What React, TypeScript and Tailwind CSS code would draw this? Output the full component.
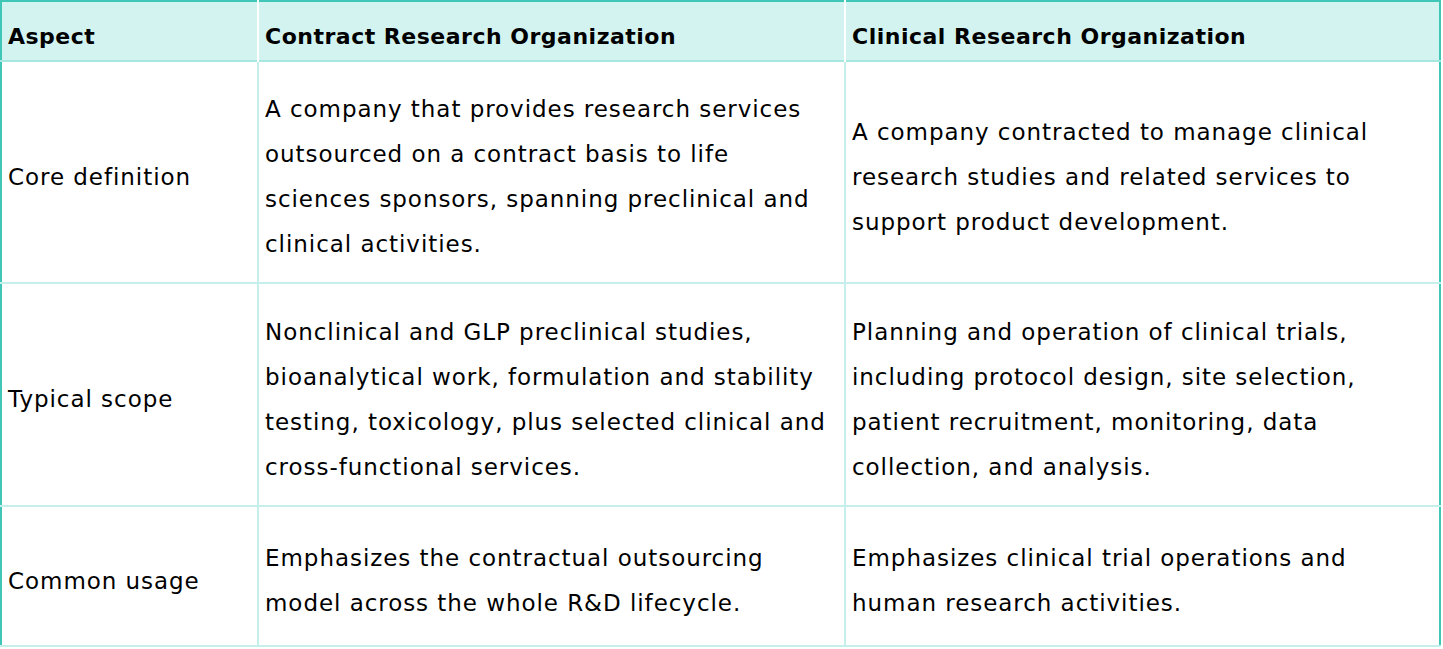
import React from "react";

const rows = [
  {
    aspect: "Core definition",
    a: "A company that provides research services outsourced on a contract basis to life sciences sponsors, spanning preclinical and clinical activities.",
    b: "A company contracted to manage clinical research studies and related services to support product development.",
    h: "h-[222px]",
  },
  {
    aspect: "Typical scope",
    a: "Nonclinical and GLP preclinical studies, bioanalytical work, formulation and stability testing, toxicology, plus selected clinical and cross-functional services.",
    b: "Planning and operation of clinical trials, including protocol design, site selection, patient recruitment, monitoring, data collection, and analysis.",
    h: "h-[223px]",
  },
  {
    aspect: "Common usage",
    a: "Emphasizes the contractual outsourcing model across the whole R&D lifecycle.",
    b: "Emphasizes clinical trial operations and human research activities.",
    h: "h-[140px]",
  },
];

const th = "text-left font-bold text-[22px] tracking-[0.5px] pl-[6px] pr-2 pt-[10px] align-middle";
const td = "align-middle text-[23px] tracking-[0.95px] leading-[45px] pl-[6px] pr-3 pt-[10px]";

export default function App() {
  return (
    <div className="w-[1443px] h-[649px] bg-white">
      <table
        className="w-[1441px] border-collapse border-2 border-[#3fc6b6] text-black"
        style={{ fontFamily: '"DejaVu Sans", sans-serif' }}
      >
        <colgroup>
          <col className="w-[257px]" />
          <col className="w-[587px]" />
          <col />
        </colgroup>
        <thead>
          <tr className="h-[60px] bg-[#d3f3f0] border-b-2 border-[#a6e8e0]">
            <th className={`${th} border-r-2 border-white`}>Aspect</th>
            <th className={`${th} border-r-2 border-white`}>Contract Research Organization</th>
            <th className={th}>Clinical Research Organization</th>
          </tr>
        </thead>
        <tbody>
          {rows.map((r) => (
            <tr key={r.aspect} className={`${r.h} border-b-2 border-[#c4efea]`}>
              <td className={`${td} border-r-2 border-[#c4efea]`}>{r.aspect}</td>
              <td className={`${td} border-r-2 border-[#c4efea]`}>{r.a}</td>
              <td className={td}>{r.b}</td>
            </tr>
          ))}
        </tbody>
      </table>
    </div>
  );
}
